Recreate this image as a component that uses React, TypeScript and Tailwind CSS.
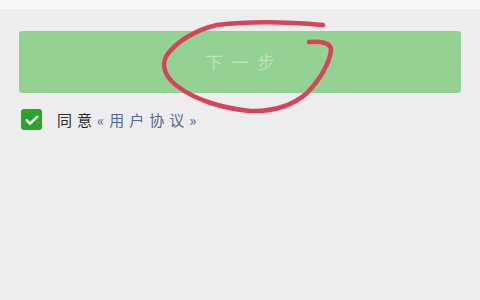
export default function App() {
  return (
    <div
      className="relative w-[480px] h-[300px] overflow-hidden bg-[#ededed]"
      style={{ fontFamily: '"Noto Sans CJK SC", "Noto Sans", sans-serif' }}
    >
      {/* top strip */}
      <div className="h-[9px] bg-[#f7f7f7]" />

      <div className="px-[19px] pt-[22px]">
        {/* next button */}
        <button className="w-full h-[62px] rounded-[3px] bg-[#94d294] text-[17px] tracking-[9px] pl-[9px] text-[#bfe4be] flex items-center justify-center">
          下一步
        </button>

        {/* agreement */}
        <div className="mt-[16px] flex items-center pl-[2px]">
          <div className="w-[21px] h-[21px] rounded-[3px] bg-[#2aa42a] flex items-center justify-center">
            <svg width="16" height="16" viewBox="0 0 24 24" fill="none" stroke="#ffffff" strokeWidth="3.6" strokeLinecap="round" strokeLinejoin="round">
              <path d="M4 12.5l5 5L20 7" />
            </svg>
          </div>
          <div className="ml-[15px] text-[15px] tracking-[5px] leading-none">
            <span className="text-[#2a2a2a]">同意</span>
            <span className="text-[#4f6a93]">«用户协议»</span>
          </div>
        </div>
      </div>

      {/* hand-drawn red annotation */}
      <svg className="absolute left-0 top-0" width="480" height="300" viewBox="0 0 480 300" fill="none">
        <path
          d="M323 25 C 290 22, 250 21, 217 25 C 195 30, 176 42, 167 55 C 160 66, 166 79, 180 88 C 195 99, 220 108, 250 111 C 275 112, 295 104, 307 93 C 320 80, 330 62, 331 50 C 331 43, 322 41, 309 42"
          stroke="#d8435c"
          strokeWidth="4.5"
          strokeLinecap="round"
          strokeLinejoin="round"
        />
      </svg>
    </div>
  );
}
